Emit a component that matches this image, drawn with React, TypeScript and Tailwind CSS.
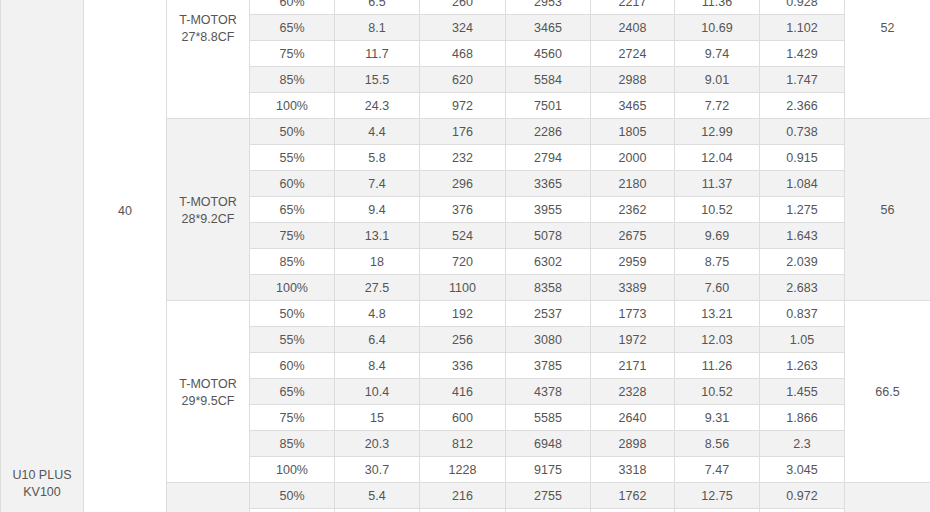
type Row = [string, string, string, string, string, string, string];

type Group = {
  prop: string;
  weight: string;
  rows: Row[];
  pad?: string;
};

const groups: Group[] = [
  {
    prop: "27*8.8CF",
    weight: "52",
    // first group is cut off at the top, keep its labels where they sit
    pad: "!pb-[52px]",
    rows: [
      ["60%", "6.5", "260", "2953", "2217", "11.36", "0.928"],
      ["65%", "8.1", "324", "3465", "2408", "10.69", "1.102"],
      ["75%", "11.7", "468", "4560", "2724", "9.74", "1.429"],
      ["85%", "15.5", "620", "5584", "2988", "9.01", "1.747"],
      ["100%", "24.3", "972", "7501", "3465", "7.72", "2.366"],
    ],
  },
  {
    prop: "28*9.2CF",
    weight: "56",
    rows: [
      ["50%", "4.4", "176", "2286", "1805", "12.99", "0.738"],
      ["55%", "5.8", "232", "2794", "2000", "12.04", "0.915"],
      ["60%", "7.4", "296", "3365", "2180", "11.37", "1.084"],
      ["65%", "9.4", "376", "3955", "2362", "10.52", "1.275"],
      ["75%", "13.1", "524", "5078", "2675", "9.69", "1.643"],
      ["85%", "18", "720", "6302", "2959", "8.75", "2.039"],
      ["100%", "27.5", "1100", "8358", "3389", "7.60", "2.683"],
    ],
  },
  {
    prop: "29*9.5CF",
    weight: "66.5",
    rows: [
      ["50%", "4.8", "192", "2537", "1773", "13.21", "0.837"],
      ["55%", "6.4", "256", "3080", "1972", "12.03", "1.05"],
      ["60%", "8.4", "336", "3785", "2171", "11.26", "1.263"],
      ["65%", "10.4", "416", "4378", "2328", "10.52", "1.455"],
      ["75%", "15", "600", "5585", "2640", "9.31", "1.866"],
      ["85%", "20.3", "812", "6948", "2898", "8.56", "2.3"],
      ["100%", "30.7", "1228", "9175", "3318", "7.47", "3.045"],
    ],
  },
  {
    prop: "",
    weight: "",
    rows: [
      ["50%", "5.4", "216", "2755", "1762", "12.75", "0.972"],
      ["", "", "", "", "", "", ""],
    ],
  },
];

const cell = "h-[26px] border border-[#dddddd] px-0 pb-0 text-center align-middle";

export default function App() {
  const total = groups.reduce((n, g) => n + g.rows.length, 0);
  let idx = 0;

  return (
    <div className="h-[512px] w-[930px] overflow-hidden bg-white">
      <table
        className="mt-[-12px] w-[930px] table-fixed border-collapse text-[12.5px] leading-[17px] text-[#555555]"
        style={{ fontFamily: '"Liberation Sans", Arial, sans-serif' }}
      >
        <colgroup>
          <col className="w-[83px]" />
          <col className="w-[83px]" />
          <col className="w-[83px]" />
          <col className="w-[85px]" />
          <col className="w-[85px]" />
          <col className="w-[86px]" />
          <col className="w-[85px]" />
          <col className="w-[84px]" />
          <col className="w-[85px]" />
          <col className="w-[85px]" />
          <col className="w-[86px]" />
        </colgroup>
        <tbody>
          {groups.map((g, gi) =>
            g.rows.map((r, ri) => {
              const striped = idx % 2 === 1;
              const first = idx === 0;
              idx++;
              const bg = striped ? "bg-[#f2f2f2]" : "bg-white";
              return (
                <tr key={`${gi}-${ri}`} className={bg}>
                  {first && (
                    <td rowSpan={total} className={`${cell} bg-[#f2f2f2] pt-[445px]`}>
                      U10 PLUS
                      <br />
                      KV100
                    </td>
                  )}
                  {first && (
                    <td rowSpan={total} className={`${cell} bg-white pt-[2px] !pb-[102px]`}>
                      40
                    </td>
                  )}
                  {ri === 0 && (
                    <td rowSpan={g.rows.length} className={`${cell} ${bg} pt-[2px] ${g.pad ?? ""}`}>
                      {g.prop && (
                        <>
                          T-MOTOR
                          <br />
                          {g.prop}
                        </>
                      )}
                    </td>
                  )}
                  {r.map((v, ci) => (
                    <td key={ci} className={`${cell} pt-[2px]`}>
                      {v}
                    </td>
                  ))}
                  {ri === 0 && (
                    <td rowSpan={g.rows.length} className={`${cell} ${bg} pt-[2px] ${g.pad ?? ""}`}>
                      {g.weight}
                    </td>
                  )}
                </tr>
              );
            })
          )}
        </tbody>
      </table>
    </div>
  );
}
